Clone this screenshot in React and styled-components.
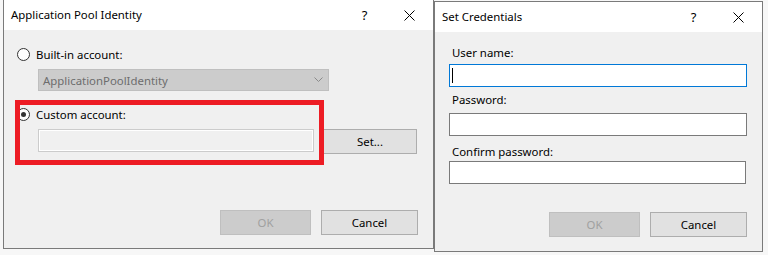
import React from "react";
import styled, { createGlobalStyle } from "styled-components";

const GlobalStyle = createGlobalStyle`
  html, body {
    margin: 0;
    padding: 0;
    background: #f7f7f7;
  }
  body {
    font-family: "Noto Sans", "Open Sans", sans-serif;
    font-size: 11.4px;
    color: #000;
  }
  * {
    box-sizing: border-box;
  }
`;

// whole screen area with the two dialogs side by side
const Desktop = styled.div`
  display: flex;
  align-items: flex-start;
  width: 768px;
  height: 255px;
  overflow: hidden;
`;

const Window = styled.div`
  position: relative;
  display: flex;
  flex-direction: column;
  width: ${(p) => p.$w}px;
  height: ${(p) => p.$h}px;
  margin-left: ${(p) => p.$left || 0}px;
  margin-top: ${(p) => p.$top || 0}px;
  background: #f0f0f0;
  border: 1px solid #7a7a7a;
  border-top: ${(p) => (p.$cropped ? "none" : "1px solid #7a7a7a")};
`;

const TitleBar = styled.div`
  display: flex;
  align-items: center;
  height: 30px;
  flex-shrink: 0;
  background: #fff;
  padding: 0 1px 0 7px;
  line-height: 16px;
`;

const Title = styled.span`
  flex: 1;
`;

const TitleButton = styled.span`
  width: 45px;
  height: 100%;
  display: flex;
  justify-content: center;
  align-items: center;
  font-size: 13px;
`;

const Body = styled.div`
  flex: 1;
  display: flex;
  flex-direction: column;
  padding: ${(p) => p.$pad};
`;

const RadioRow = styled.label`
  display: flex;
  align-items: center;
  gap: 6px;
  height: 14px;
  margin-top: ${(p) => p.$mt || 0}px;
`;

const Radio = styled.span`
  width: 13px;
  height: 13px;
  border-radius: 50%;
  border: 1px solid #333;
  background: #fff;
  display: flex;
  align-items: center;
  justify-content: center;
  &::after {
    content: "";
    width: 5px;
    height: 5px;
    border-radius: 50%;
    background: ${(p) => (p.$checked ? "#333" : "transparent")};
  }
`;

const Dropdown = styled.div`
  display: flex;
  align-items: center;
  justify-content: space-between;
  width: 291px;
  height: 22px;
  margin: 8px 0 0 21px;
  padding: 0 5px 0 4px;
  background: #cccccc;
  border: 1px solid #bfbfbf;
  color: #6d6d6d;
`;

const FieldRow = styled.div`
  display: flex;
  align-items: flex-start;
  margin-top: 8px;
`;

const TextBox = styled.div`
  display: flex;
  align-items: center;
  width: ${(p) => p.$w}px;
  height: 23px;
  margin-left: ${(p) => p.$ml || 0}px;
  margin-top: ${(p) => p.$mt || 0}px;
  padding-left: 2px;
  background: ${(p) => (p.$disabled ? "#f0f0f0" : "#fff")};
  border: 1px solid
    ${(p) => (p.$focus ? "#0078d7" : p.$disabled ? "#cccccc" : "#7a7a7a")};
  box-shadow: ${(p) => (p.$disabled ? "inset 0 0 0 1px #fff" : "none")};
`;

const Caret = styled.span`
  width: 1px;
  height: 15px;
  background: #000;
`;

const Button = styled.div`
  display: flex;
  align-items: center;
  justify-content: center;
  width: ${(p) => p.$w}px;
  height: 25px;
  margin-left: ${(p) => p.$ml || 0}px;
  background: ${(p) => (p.$disabled ? "#cccccc" : "#e1e1e1")};
  border: 1px solid ${(p) => (p.$disabled ? "#bfbfbf" : "#adadad")};
  color: ${(p) => (p.$disabled ? "#a0a0a0" : "#000")};
`;

const Footer = styled.div`
  display: flex;
  justify-content: flex-end;
  gap: 10px;
  margin-top: auto;
`;

const FieldLabel = styled.div`
  height: 16px;
  line-height: 16px;
  padding-left: 3px;
  margin-top: ${(p) => p.$mt}px;
`;

// the red highlight drawn over the screenshot
const Highlight = styled.div`
  position: absolute;
  left: 11px;
  top: 100px;
  width: 309px;
  height: 65px;
  border: 5px solid #ed1c24;
  pointer-events: none;
`;

const Close = () => (
  <svg width="11" height="11" viewBox="0 0 11 11">
    <path d="M0.5 0.5L10.5 10.5M10.5 0.5L0.5 10.5" stroke="#000" strokeWidth="1" />
  </svg>
);

const Chevron = () => (
  <svg width="9" height="6" viewBox="0 0 9 6">
    <path d="M0.5 0.5L4.5 4.5L8.5 0.5" fill="none" stroke="#8a8a8a" strokeWidth="1" />
  </svg>
);

function TitleBarRow({ title }) {
  return (
    <TitleBar>
      <Title>{title}</Title>
      <TitleButton>?</TitleButton>
      <TitleButton>
        <Close />
      </TitleButton>
    </TitleBar>
  );
}

export default function App() {
  return (
    <>
      <GlobalStyle />
      <Desktop>
        {/* Application Pool Identity dialog */}
        <Window $w={431} $h={249} $left={3} $cropped>
          <TitleBarRow title="Application Pool Identity" />
          <Body $pad="17px 15px 13px 13px">
            <RadioRow>
              <Radio />
              Built-in account:
            </RadioRow>
            <Dropdown>
              <span>ApplicationPoolIdentity</span>
              <Chevron />
            </Dropdown>
            <RadioRow $mt={16}>
              <Radio $checked />
              Custom account:
            </RadioRow>
            <FieldRow>
              <TextBox $w={276} $ml={21} $disabled />
              <Button $w={94} $ml={9}>
                Set...
              </Button>
            </FieldRow>
            <Footer>
              <Button $w={91} $disabled>
                OK
              </Button>
              <Button $w={97}>Cancel</Button>
            </Footer>
          </Body>
          <Highlight />
        </Window>

        {/* Set Credentials dialog */}
        <Window $w={329} $h={251} $top={1}>
          <TitleBarRow title="Set Credentials" />
          <Body $pad="0 15px 14px 14px">
            <FieldLabel $mt={13}>User name:</FieldLabel>
            <TextBox $w={298} $mt={3} $focus>
              <Caret />
            </TextBox>
            <FieldLabel $mt={5}>Password:</FieldLabel>
            <TextBox $w={298} $mt={5} />
            <FieldLabel $mt={8}>Confirm password:</FieldLabel>
            <TextBox $w={297} $mt={1} />
            <Footer>
              <Button $w={91} $disabled>
                OK
              </Button>
              <Button $w={97}>Cancel</Button>
            </Footer>
          </Body>
        </Window>
      </Desktop>
    </>
  );
}
